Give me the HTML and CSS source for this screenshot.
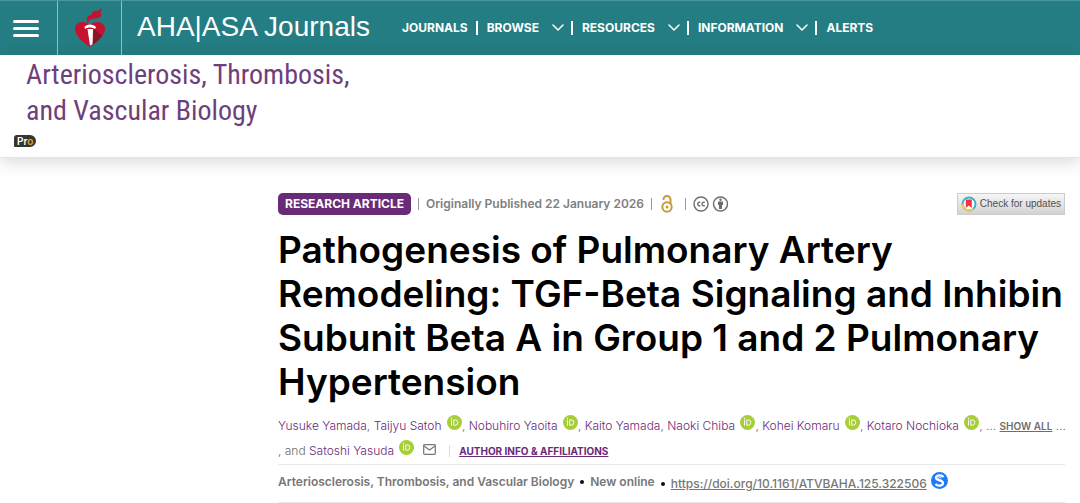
FILE: index.html
```html
<!DOCTYPE html>
<html lang="en">
<head>
<meta charset="utf-8">
<meta name="viewport" content="width=device-width, initial-scale=1">
<title>Pathogenesis of Pulmonary Artery Remodeling | AHA|ASA Journals</title>
<link rel="stylesheet" href="styles.css">
</head>
<body>
<svg class="defs" aria-hidden="true">
  <symbol id="orcid" viewBox="0 0 16 16">
    <circle cx="8" cy="8" r="8" fill="#a6ce39"/>
    <path d="M4.8 5.2v6.1M7.2 5.2v5.7h1.5a2.8 2.8 0 0 0 0-5.7z" fill="none" stroke="#fff" stroke-width="1"/>
    <circle cx="4.8" cy="3.7" r=".7" fill="#fff"/>
  </symbol>
  <symbol id="chevron" viewBox="0 0 12 8">
    <path d="M1 1l5 5 5-5" fill="none" stroke="#fff" stroke-width="1.5" stroke-linecap="round"/>
  </symbol>
</svg>
<header class="topbar">
  <button class="menu" type="button" aria-label="Menu"><span></span><span></span><span></span></button>
  <a class="heart" href="#" aria-label="American Heart Association">
    <svg width="30" height="40" viewBox="0 0 30 40">
      <path d="M15 39C9 35 0 28 0 21c0-7 9-9.500 15-4 6-5.500 15-3 15 4 0 7-9 14-15 18z" fill="#c41230"/>
      <path d="M19 21l8 7c-3 4-7 7-10 9.500z" fill="#861624"/>
      <path d="M13 15c-3-5 0-8 4-8-1-3 1-4 4-4 2 0 4-1 5-3 1 3 0 4-1 5 2 0 2 4-2 5-3 1-6 0-8 2-1 1-1 1-2 3z" fill="#c41230"/>
      <path d="M9.500 19c2-3.500 9-3.500 11.500 0l-1 2c-3-2-7-2-10 0z" fill="#fff"/>
      <path d="M12.500 21h5.500l-.4 15-1.700 1.500-1-.5z" fill="#fff"/>
    </svg>
  </a>
  <a class="brand" href="#">AHA|ASA Journals</a>
  <nav class="nav">
    <a href="#">JOURNALS</a>
    <button type="button">BROWSE <svg width="12" height="8"><use href="#chevron"/></svg></button>
    <button type="button">RESOURCES <svg width="12" height="8"><use href="#chevron"/></svg></button>
    <button type="button">INFORMATION <svg width="12" height="8"><use href="#chevron"/></svg></button>
    <a href="#">ALERTS</a>
  </nav>
</header>
<section class="journal">
  <a class="journal-name" href="#">Arteriosclerosis, Thrombosis,<br>and Vascular Biology</a>
  <span class="pro">Pr<i>o</i></span>
</section>
<main class="article">
  <div class="meta">
    <span class="tag">RESEARCH ARTICLE</span>
    <span class="bar"></span>
    <span class="date">Originally Published 22 January 2026</span>
    <span class="bar"></span>
    <svg class="access" width="12" height="18" viewBox="0 0 12 18" fill="none" stroke="#c9993b" stroke-width="2">
      <circle cx="6" cy="12" r="4.700"/><path d="M2.500 5V4.300a3.500 3.300 0 0 1 7 0V9"/><circle cx="6" cy="12" r="1.500" fill="#c9993b" stroke="none"/>
    </svg>
    <span class="bar"></span>
    <svg class="license" width="35" height="16" viewBox="0 0 35 16" fill="none" stroke="#6d6d6d" stroke-width="1.400">
      <circle cx="8" cy="8" r="7"/><path d="M7.300 6.600a1.700 1.700 0 1 0 0 2.800M11.700 6.600a1.700 1.700 0 1 0 0 2.800"/>
      <circle cx="27.500" cy="8" r="7"/><circle cx="27.500" cy="3.700" r="1.200" fill="#6d6d6d" stroke="none"/>
      <path d="M25 5.500h5V9h-1v4h-3V9h-1z" fill="#6d6d6d" stroke="none"/>
    </svg>
    <button class="updates" type="button">
      <svg width="16" height="16" viewBox="0 0 16 16">
        <circle cx="8" cy="8" r="6.500" fill="#fff" stroke="#3eb1c8" stroke-width="2"/>
        <path d="M1.500 8a6.500 6.500 0 0 0 11 4.700" fill="none" stroke="#f0c65a" stroke-width="2"/>
        <path d="M4.800 3.500h6v8.500l-3-2.500-3 2.500z" fill="#ef3340"/>
      </svg>
      Check for updates
    </button>
  </div>
  <h1>Pathogenesis of Pulmonary Artery Remodeling: TGF-Beta Signaling and Inhibin Subunit Beta A in Group 1 and 2 Pulmonary Hypertension</h1>
  <div class="authors">
    <a href="#">Yusuke Yamada</a>, <a href="#">Taijyu Satoh <svg class="orcid"><use href="#orcid"/></svg></a>, <a href="#">Nobuhiro Yaoita <svg class="orcid"><use href="#orcid"/></svg></a>, <a href="#">Kaito Yamada</a>, <a href="#">Naoki Chiba <svg class="orcid"><use href="#orcid"/></svg></a>, <a href="#">Kohei Komaru <svg class="orcid"><use href="#orcid"/></svg></a>, <a href="#">Kotaro Nochioka <svg class="orcid"><use href="#orcid"/></svg></a>, ... <button class="show" type="button">SHOW ALL</button> ...<br>
    , and <a href="#">Satoshi Yasuda <svg class="orcid"><use href="#orcid"/></svg></a>
    <svg class="mail" width="13" height="11" viewBox="0 0 13 11" fill="none" stroke="#777" stroke-width="1.200"><rect x=".7" y=".7" width="11.600" height="9.600" rx=".8"/><path d="M1 2l5.500 4L12 2"/></svg>
    <a class="affil" href="#">AUTHOR INFO &amp; AFFILIATIONS</a>
  </div>
  <div class="source">
    <span>Arteriosclerosis, Thrombosis, and Vascular Biology</span>
    <span class="dot"></span>
    <span>New online</span>
    <span class="dot low"></span>
    <a class="doi" href="#">https://doi.org/10.1161/ATVBAHA.125.322506</a>
    <svg class="badge" width="17" height="17" viewBox="0 0 17 17"><circle cx="8.500" cy="8.500" r="8.500" fill="#1f7cf0"/><path d="M12.500 5C10.500 2.500 5 3 5 6c0 3 7 2 7 5 0 3-5.500 3.500-7.500 1" fill="none" stroke="#fff" stroke-width="2.200"/><path d="M10.500 6.200C9.500 5 7 5.500 7.300 6.500c.5 1.300 5 1 5 4" fill="none" stroke="#fff" stroke-width="1"/></svg>
  </div>
</main>
</body>
</html>
```
FILE: styles.css
```css
* { box-sizing: border-box; }
body { margin: 0; background: #fff; color: #6d6d6d; font-family: Inter, "Liberation Sans", sans-serif; }
a { color: inherit; text-decoration: none; }
button { border: 0; padding: 0; background: none; color: inherit; font: inherit; cursor: pointer; }
.defs { position: absolute; width: 0; height: 0; }

.topbar { display: flex; align-items: stretch; height: 55px; background: #247d82; border-top: 1px solid #4a979b; color: #fff; }
.menu { display: flex; flex-direction: column; justify-content: center; gap: 4px; width: 57px; padding-left: 13px; }
.menu span { width: 26px; height: 3px; border-radius: 2px; background: #fff; }
.heart { display: flex; align-items: center; justify-content: center; width: 65px; border: solid #93bfc2; border-width: 0 1px; }
.brand { display: flex; align-items: center; padding: 0 32px 2px 15px; font: 28px/32px "Liberation Sans", Arial, sans-serif; white-space: nowrap; }
.nav { display: flex; align-items: center; font-size: 12px; font-weight: 700; line-height: 14px; }
.nav > * { display: flex; align-items: center; white-space: nowrap; }
.nav > * + * { border-left: 2px solid #fff; padding-left: 9px; }
.nav a:first-child { padding-right: 8px; }
.nav button { gap: 13px; padding-right: 7px; }

.journal { display: flex; flex-direction: column; align-items: flex-start; padding: 2px 14px 10px; border-bottom: 1px solid #e4e4e4; box-shadow: 0 4px 16px rgba(0, 0, 0, .15); }
.journal-name { padding-left: 12px; color: #6f3f7b; font: 28px/36px "Liberation Sans Narrow", "Roboto Condensed", Roboto, sans-serif; }
.pro { margin-top: 6px; padding: 0 3px; border-radius: 3px 6px 6px 1px; background: #353632; color: #fff; font-size: 10px; font-weight: 600; line-height: 12px; }
.pro i { color: #e9a52c; font-style: normal; }

.article { margin: 35px 15px 0 278px; }
.meta { display: flex; align-items: center; font-size: 12px; line-height: 14px; white-space: nowrap; }
.tag { padding: 4px 7px; border-radius: 5px; background: #692a77; color: #fff; font-weight: 700; }
.bar { width: 1px; height: 12px; margin: 0 7px; background: #999; }
.date { font-weight: 600; color: #808080; }
.access { margin: 0 5px 0 2px; }
.updates { display: flex; align-items: center; gap: 3px; height: 22px; margin-left: auto; padding: 0 3px; border: 1px solid #ccc; background: linear-gradient(#f6f6f6, #d2d2d2); color: #505050; font: 10px/14px "Liberation Sans", Arial, sans-serif; }
h1 { margin: 13px 0 0; color: #000; font-size: 37px; font-weight: 600; line-height: 44px; }
.authors { margin-top: 9px; border-bottom: 1px solid #e8e8e8; font-size: 12px; font-weight: 300; line-height: 25px; white-space: nowrap; }
.authors a { color: #692a77; }
.orcid { width: 15px; height: 15px; margin-left: 2px; vertical-align: 0; }
.show { font-size: 10px; font-weight: 600; line-height: 14px; text-decoration: underline; }
.mail { margin: 0 10px 0 5px; }
.authors .affil { padding-left: 9px; border-left: 1px solid #ddd; color: #692a77; font-size: 10px; font-weight: 700; text-decoration: underline; }
.source { display: flex; align-items: center; height: 38px; padding-bottom: 3px; border-bottom: 1px solid #e8e8e8; color: #777; font-size: 12px; font-weight: 600; line-height: 14px; white-space: nowrap; }
.dot { width: 4px; height: 4px; margin: 0 6px; border-radius: 50%; background: #111; }
.low { margin-top: 4px; }
.doi { padding-top: 4px; font-weight: 500; text-decoration: underline; }
.badge { margin: 0 0 3px 4px; }
```
